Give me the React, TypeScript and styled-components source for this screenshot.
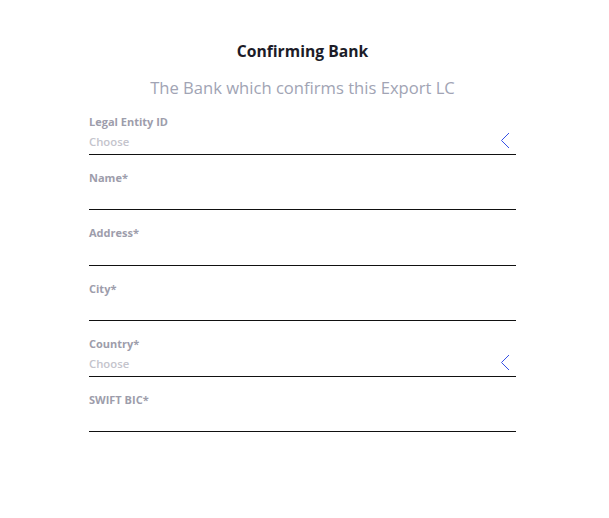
import React from "react";
import styled, { createGlobalStyle } from "styled-components";

const Global = createGlobalStyle`
  html, body { margin: 0; padding: 0; background: #fff; }
  body { font-family: "Open Sans", "Liberation Sans", sans-serif; }
`;

const Page = styled.div`
  padding: 40px 93px 0 89px;
  display: flex;
  flex-direction: column;
`;

const Title = styled.h1`
  margin: 0;
  text-align: center;
  font-family: "Open Sans", sans-serif;
  font-weight: 700;
  font-size: 15.7px;
  line-height: 22px;
  color: #1c1c28;
`;

const Subtitle = styled.p`
  margin: 15px 0 0;
  text-align: center;
  font-family: "Open Sans", sans-serif;
  font-weight: 400;
  font-size: 16.6px;
  line-height: 22px;
  color: #a1a4b4;
`;

const Form = styled.div`
  display: flex;
  flex-direction: column;
  margin-top: 0;
`;

const Field = styled.div`
  position: relative;
  height: 54.5px;
  border-bottom: 1px solid #111;
  box-sizing: content-box;
  display: flex;
  flex-direction: column;
`;

const Label = styled.div`
  margin-top: 15px;
  font-family: "Open Sans", sans-serif;
  font-weight: 700;
  font-size: 11px;
  line-height: 16px;
  color: #9d9dab;
`;

const Value = styled.div`
  margin-top: 4px;
  font-family: "Open Sans", sans-serif;
  font-weight: 600;
  font-size: 11.3px;
  line-height: 16px;
  color: #c4c4cc;
`;

const Chevron = styled.svg`
  position: absolute;
  right: 6px;
  bottom: 5px;
  width: 10px;
  height: 17px;
`;

type F = { label: string; select?: boolean };

const fields: F[] = [
  { label: "Legal Entity ID", select: true },
  { label: "Name*" },
  { label: "Address*" },
  { label: "City*" },
  { label: "Country*", select: true },
  { label: "SWIFT BIC*" },
];

export default function App() {
  return (
    <>
      <Global />
      <Page>
        <Title>Confirming Bank</Title>
        <Subtitle>The Bank which confirms this Export LC</Subtitle>
        <Form>
          {fields.map((f) => (
            <Field key={f.label}>
              <Label>{f.label}</Label>
              {f.select && <Value>Choose</Value>}
              {f.select && (
                <Chevron viewBox="0 0 10 17">
                  <path d="M9 1 L1.5 8.5 L9 16" fill="none" stroke="#3550e6" strokeWidth="1" />
                </Chevron>
              )}
            </Field>
          ))}
        </Form>
      </Page>
    </>
  );
}
